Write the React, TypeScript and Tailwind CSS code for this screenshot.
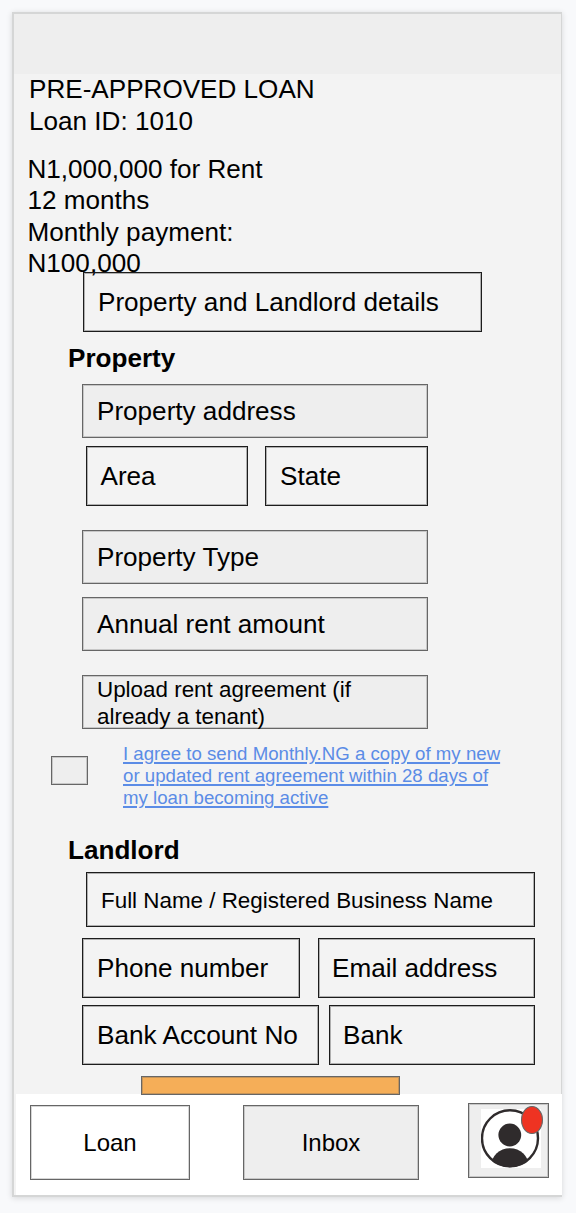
import type { ReactNode } from "react";

function Field({ className, children }: { className: string; children?: ReactNode }) {
  return (
    <div
      className={`flex shrink-0 items-center border pt-[2px] whitespace-nowrap ${className}`}
    >
      {children}
    </div>
  );
}

const outline = "border-[#1c1c1c] shadow-[inset_0_0_0_1px_rgba(0,0,0,0.28)]";
const filled = "border-[#666666] bg-[#eeeeee] shadow-[inset_0_0_0_1px_rgba(0,0,0,0.16)]";

function Avatar() {
  return (
    <svg width="60" height="60" viewBox="0 0 60 60" className="block">
      <defs>
        <clipPath id="face">
          <circle cx="29" cy="29.3" r="29" />
        </clipPath>
      </defs>
      <rect width="60" height="59" fill="#ffffff" />
      <circle cx="29" cy="29.3" r="28" fill="none" stroke="#2f2b2c" strokeWidth="2.4" />
      <circle cx="28.8" cy="26" r="11.4" fill="#2f2b2c" />
      <ellipse cx="28.9" cy="57.5" rx="19" ry="18.3" fill="#2f2b2c" clipPath="url(#face)" />
    </svg>
  );
}

export default function App() {
  return (
    <div className="h-[1213px] w-[576px] overflow-hidden bg-[#f8f9fb] pt-[12px] pl-[12px] font-['Liberation_Sans',Arial,sans-serif] text-[26.1px] leading-[31.3px] text-black">
      <div className="flex h-[1185px] w-[550px] flex-col border-t-2 border-r border-b-2 border-l-2 border-[#d5d6d6] bg-[#f3f3f3] shadow-[0_1px_6px_rgba(0,0,0,0.14)]">
        <header className="h-[60px] shrink-0 bg-[#eeeeee]" />
        <main className="flex h-[1020px] shrink-0 flex-col items-start">
          <div className="-mt-px h-[64px] shrink-0 pl-[15px] leading-[32px] whitespace-nowrap">
            <h1>PRE-APPROVED LOAN</h1>
            <p>Loan ID: 1010</p>
          </div>
          <div className="mt-[17px] h-[118px] shrink-0 pl-[13.5px] whitespace-nowrap">
            <p>N1,000,000 for Rent</p>
            <p>12 months</p>
            <p>Monthly payment:</p>
            <p>N100,000</p>
          </div>
          <Field className={`ml-[69px] h-[60px] w-[399px] pl-[14px] ${outline}`}>
            Property and Landlord details
          </Field>
          <h2 className="mt-[11px] ml-[54px] h-[41px] shrink-0 font-bold">Property</h2>
          <Field className={`ml-[68px] h-[54px] w-[346px] pl-[14px] ${filled}`}>
            Property address
          </Field>
          <div className="mt-[8px] ml-[72px] flex shrink-0 gap-[17px]">
            <Field className={`h-[60px] w-[162px] pl-[13.5px] ${outline}`}>Area</Field>
            <Field className={`h-[60px] w-[163px] pl-[14px] ${outline}`}>State</Field>
          </div>
          <Field className={`mt-[24px] ml-[68px] h-[54px] w-[346px] pl-[14px] ${filled}`}>
            Property Type
          </Field>
          <Field className={`mt-[13px] ml-[68px] h-[54px] w-[346px] pl-[14px] ${filled}`}>
            Annual rent amount
          </Field>
          <Field
            className={`mt-[24px] ml-[68px] h-[54px] w-[346px] pl-[14px] text-[22.4px] leading-[27px] ${filled}`}
          >
            <span>
              Upload rent agreement (if
              <br />
              already a tenant)
            </span>
          </Field>
          <div className="mt-[13px] ml-[37px] flex h-[95px] shrink-0 items-start">
            <div className={`mt-[14px] h-[29px] w-[37px] border ${filled}`} />
            <a
              href="#"
              className="ml-[35px] pt-[0.5px] text-[18.67px] leading-[22.4px] whitespace-nowrap text-[#5b8ce6] underline decoration-[1.5px] underline-offset-2"
            >
              I agree to send Monthly.NG a copy of my new
              <br />
              or updated rent agreement within 28 days of
              <br />
              my loan becoming active
            </a>
          </div>
          <h2 className="-mt-[2px] ml-[54px] h-[37px] shrink-0 font-bold">Landlord</h2>
          <Field className={`ml-[72px] h-[55px] w-[449px] pl-[14px] text-[22.4px] ${outline}`}>
            Full Name / Registered Business Name
          </Field>
          <div className="mt-[11px] ml-[68px] flex shrink-0 gap-[18px]">
            <Field className={`h-[60px] w-[218px] pl-[14px] ${outline}`}>Phone number</Field>
            <Field className={`h-[60px] w-[217px] pl-[13px] ${outline}`}>Email address</Field>
          </div>
          <div className="mt-[7px] ml-[68px] flex shrink-0 gap-[10px]">
            <Field className={`h-[60px] w-[237px] pl-[14px] text-[26.2px] ${outline}`}>
              Bank Account No
            </Field>
            <Field className={`h-[60px] w-[206px] pl-[13px] ${outline}`}>Bank</Field>
          </div>
          <div className="relative mt-[11px] ml-[127px] h-[19px] w-[259px] shrink-0 border border-[#666666] bg-[#f5ae58] shadow-[inset_0_0_0_1px_rgba(90,90,90,0.3)]" />
        </main>
        <nav className="mr-[-1px] ml-[2px] flex h-[101px] shrink-0 items-start bg-white text-[24px]">
          <div className="mt-[11px] ml-[14px] flex h-[75px] w-[160px] items-center justify-center border border-[#666666] shadow-[inset_0_0_0_1px_rgba(0,0,0,0.16)]">
            Loan
          </div>
          <div
            className={`mt-[11px] ml-[53px] flex h-[75px] w-[176px] items-center justify-center border ${filled}`}
          >
            Inbox
          </div>
          <div
            className={`relative mt-[9px] ml-[49px] h-[75px] w-[81px] border pt-[5px] pl-[12px] ${filled}`}
          >
            <Avatar />
            <span className="absolute top-[2px] left-[52px] h-[28px] w-[22px] rounded-[50%] border border-[#666666] bg-[#ee3322]" />
          </div>
        </nav>
      </div>
    </div>
  );
}
